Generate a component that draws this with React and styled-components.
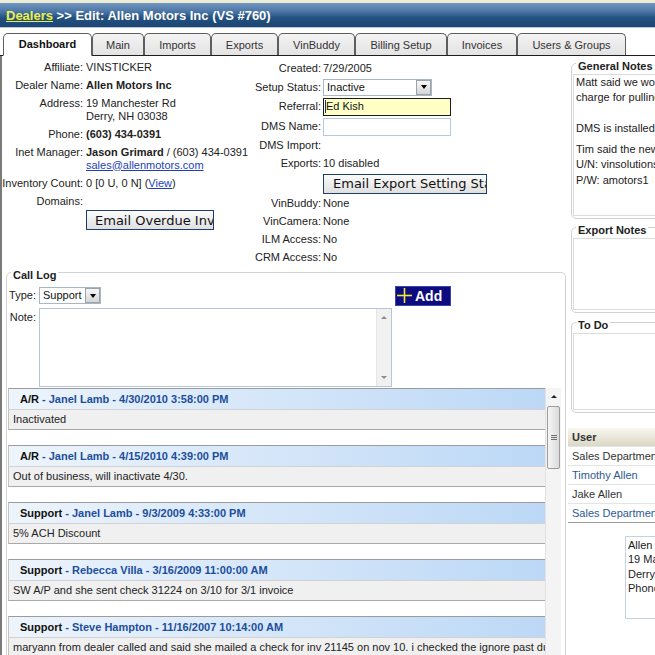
import React from 'react'
import styled, { createGlobalStyle } from 'styled-components'

const GlobalStyle = createGlobalStyle`
  html, body {
    margin: 0;
    padding: 0;
    background: #fff;
    overflow: hidden;
  }
  body {
    font-family: "Liberation Sans", Arial, sans-serif;
    font-size: 11px;
    color: #222;
  }
`

const Page = styled.div`
  width: 800px;
`

const TopStrip = styled.div`
  height: 3px;
  background: #ecebd4;
`

const Header = styled.div`
  height: 25px;
  box-sizing: border-box;
  background: linear-gradient(#7397c0 0%, #4b76a6 35%, #23517f 62%, #1b4574 100%);
  border-bottom: 1px solid #b9c9da;
  display: flex;
  align-items: center;
  padding-left: 6px;
  font: bold 13px "Liberation Sans", Arial, sans-serif;
  color: #fff;
  white-space: nowrap;

  a {
    color: #eef04a;
    text-decoration: underline;
  }
`

const TabBar = styled.div`
  margin-top: 5px;
  height: 22px;
  border-bottom: 1px solid #1e1e1e;
  display: flex;
  align-items: flex-end;
  padding-left: 3px;
`

const Tab = styled.div`
  width: ${p => p.$w}px;
  height: ${p => (p.$active ? 23 : 22)}px;
  margin-bottom: ${p => (p.$active ? -1 : 0)}px;
  box-sizing: border-box;
  border: 1px solid #5e5e5e;
  border-bottom: ${p => (p.$active ? '1px solid #fff' : 'none')};
  border-radius: 5px 5px 0 0;
  background: ${p => (p.$active ? '#fff' : 'linear-gradient(#f3f3f3, #e3e3e3)')};
  font-weight: ${p => (p.$active ? 'bold' : 'normal')};
  color: ${p => (p.$active ? '#111' : '#333')};
  display: flex;
  align-items: center;
  justify-content: center;
  padding-bottom: ${p => (p.$active ? 1 : 0)}px;
  white-space: nowrap;
`

const Content = styled.div`
  display: flex;
  align-items: flex-start;
`

const Main = styled.div`
  width: 566px;
  flex: none;
  box-sizing: border-box;
  border-left: 2px solid #7a7a7a;
  height: 620px;
`

const TopSection = styled.div`
  display: flex;
  padding-top: 2px;
`

const Form = styled.div`
  display: grid;
  grid-template-columns: ${p => p.$label}px auto;
  column-gap: ${p => p.$gap}px;
  width: ${p => p.$width}px;
  margin-top: ${p => p.$offset || 0}px;
  align-content: start;
  align-items: center;
`

const Label = styled.div`
  text-align: right;
  line-height: 13px;
  padding: 2.5px 0;
  white-space: nowrap;
  align-self: ${p => (p.$top ? 'start' : 'center')};
`

const Value = styled.div`
  line-height: 13px;
  padding: ${p => p.$pad || '2.5px 0'};
  white-space: nowrap;
`

const Strong = styled.b`
  font-weight: bold;
`

const Link = styled.a`
  color: #1d3fb4;
  text-decoration: underline;
`

const GrayButton = styled.button`
  display: block;
  width: ${p => p.$w}px;
  height: 20px;
  margin: 0;
  padding: 0 0 0 ${p => p.$indent || 8}px;
  box-sizing: border-box;
  border: 1px solid #1d3d6b;
  background: linear-gradient(#fbfbfb, #e0e0e0);
  font: 13px "DejaVu Sans", Verdana, sans-serif;
  color: #111;
  text-align: left;
  white-space: nowrap;
  overflow: hidden;
`

const Select = styled.div`
  width: ${p => p.$w}px;
  height: 17px;
  box-sizing: border-box;
  border: 1px solid #a8b6c6;
  background: #fff;
  display: flex;
  align-items: center;
  justify-content: space-between;
  padding-left: 3px;
  line-height: 13px;
  color: #111;
`

const DropButton = styled.span`
  width: 15px;
  height: 15px;
  box-sizing: border-box;
  border: 1px solid #9aa2ab;
  background: linear-gradient(#f7f7f7, #d6d6d6);
  display: flex;
  align-items: center;
  justify-content: center;

  &::after {
    content: '';
    border-left: 3.5px solid transparent;
    border-right: 3.5px solid transparent;
    border-top: 4px solid #000;
  }
`

const TextInput = styled.div`
  width: 128px;
  height: 18px;
  box-sizing: border-box;
  border: 1px solid ${p => (p.$focus ? '#1c1c1c' : '#b7c9dc')};
  background: ${p => (p.$focus ? '#ffffc6' : '#fff')};
  display: flex;
  align-items: center;
  padding-left: 1px;
  color: #111;
`

const Caret = styled.span`
  width: 1px;
  height: 13px;
  background: #1b2f8a;
`

const Group = styled.div`
  border: 1px solid #d2d2d2;
  border-radius: 5px;
  margin: ${p => p.$margin};
  padding: ${p => p.$pad || '0'};
`

const GroupTitle = styled.div`
  width: fit-content;
  background: #fff;
  font-weight: bold;
  line-height: 13px;
  color: #222;
  margin: -4px 0 0 4px;
  padding: 0 2px;
`

const CallGrid = styled.div`
  display: grid;
  grid-template-columns: 29px 353px 56px;
  column-gap: 3px;
  row-gap: 2px;
  padding-top: 4px;
  align-items: center;
`

const CallLabel = styled.div`
  text-align: right;
  line-height: 13px;
  align-self: ${p => (p.$top ? 'start' : 'center')};
  padding-top: ${p => (p.$top ? 3 : 0)}px;
`

const NoteBox = styled.div`
  height: 79px;
  box-sizing: border-box;
  border: 1px solid #b5c6d8;
  display: flex;
  justify-content: flex-end;
`

const MiniScroll = styled.div`
  width: 15px;
  background: #f1f1f1;
  border-left: 1px solid #e6e6e6;
  display: flex;
  flex-direction: column;
  justify-content: space-between;
  align-items: center;
  padding: 7px 0;
  box-sizing: border-box;
`

const Arrow = styled.span`
  border-left: 3px solid transparent;
  border-right: 3px solid transparent;
  ${p => (p.$down ? 'border-top' : 'border-bottom')}: 3px solid ${p => p.$color || '#8c8c8c'};
`

const AddButton = styled.button`
  align-self: start;
  width: 56px;
  height: 20px;
  margin: 0;
  box-sizing: border-box;
  border: 1px solid #3b45a6;
  background: #0c0c80;
  color: #fff;
  font: bold 14px "Liberation Sans", Arial, sans-serif;
  display: flex;
  align-items: center;
  padding: 0 0 0 1px;
  gap: 3px;
`

const LogArea = styled.div`
  margin: 1px 4px 0 1px;
  height: 275px;
  display: flex;
  overflow: hidden;
`

const Entries = styled.div`
  flex: 1;
  min-width: 0;
`

const Entry = styled.div`
  margin-bottom: 15px;
`

const EntryHead = styled.div`
  height: 21px;
  box-sizing: border-box;
  border-top: 1px solid #9c9c9c;
  border-left: 1px solid #c2c2c2;
  background: linear-gradient(to right, #edf4fc, #bcd8f6);
  padding-left: 11px;
  display: flex;
  align-items: center;
  font-weight: bold;
  color: #111;
  white-space: nowrap;
`

const Who = styled.span`
  color: #1c4e9b;
`

const EntryBody = styled.div`
  height: 21px;
  box-sizing: border-box;
  border-left: 1px solid #c2c2c2;
  border-top: 1px solid #d2d2d2;
  border-bottom: 1px solid #a9a9a9;
  background: #f0f0f0;
  padding-left: 4px;
  display: flex;
  align-items: center;
  white-space: nowrap;
  overflow: hidden;
  color: #222;
`

const VScroll = styled.div`
  width: 15px;
  flex: none;
  background: #f4f4f4;
  border-left: 1px solid #e2e2e2;
  display: flex;
  flex-direction: column;
  align-items: center;
`

const ScrollUp = styled.div`
  height: 17px;
  display: flex;
  align-items: center;
  justify-content: center;
`

const Thumb = styled.div`
  width: 13px;
  height: 63px;
  margin-top: 1px;
  box-sizing: border-box;
  border: 1px solid #9b9b9b;
  border-radius: 2px;
  background: linear-gradient(to right, #f6f6f6, #dadada);
  display: flex;
  flex-direction: column;
  align-items: center;
  justify-content: center;
  gap: 1px;
`

const Grip = styled.span`
  width: 6px;
  height: 1px;
  background: #6d6d6d;
`

const Sidebar = styled.div`
  width: 232px;
  flex: none;
`

const NoteArea = styled.div`
  height: ${p => p.$h}px;
  margin: 1px 0 2px 1px;
  box-sizing: border-box;
  border: 1px solid #dcdcdc;
  border-right: none;
  padding-left: 2px;
  overflow: hidden;
  color: #222;
`

const NoteLine = styled.div`
  line-height: 15px;
  margin-top: ${p => p.$mt || 0}px;
  white-space: nowrap;
`

const UserTable = styled.div`
  margin: 15px 0 0 2px;
  border-bottom: 1px solid #9c9c9c;
`

const UserHead = styled.div`
  height: 18px;
  background: linear-gradient(#f8f6ef, #dcd8c6);
  font-weight: bold;
  color: #333;
  padding-left: 4px;
  display: flex;
  align-items: center;
`

const UserRow = styled.div`
  height: 19px;
  box-sizing: border-box;
  border-top: 1px solid #e4e4e4;
  padding-left: 4px;
  display: flex;
  align-items: center;
  white-space: nowrap;
  color: ${p => (p.$alt ? '#2d5a94' : '#333')};
`

const AddressBox = styled.div`
  margin: 13px 0 0 59px;
  height: 83px;
  box-sizing: border-box;
  border: 1px solid #c4d1df;
  border-right: none;
  padding: 1px 0 0 2px;
  line-height: 14.5px;
  white-space: nowrap;
  color: #222;
`

const Highlight = styled.span`
  color: #e2a11c;
`

const tabs = [
  { label: 'Dashboard', w: 89, active: true },
  { label: 'Main', w: 52 },
  { label: 'Imports', w: 67 },
  { label: 'Exports', w: 67 },
  { label: 'VinBuddy', w: 77 },
  { label: 'Billing Setup', w: 92 },
  { label: 'Invoices', w: 70 },
  { label: 'Users & Groups', w: 109 },
]

const calls = [
  { type: 'A/R', who: 'Janel Lamb - 4/30/2010 3:58:00 PM', note: 'Inactivated' },
  { type: 'A/R', who: 'Janel Lamb - 4/15/2010 4:39:00 PM', note: 'Out of business, will inactivate 4/30.' },
  { type: 'Support', who: 'Janel Lamb - 9/3/2009 4:33:00 PM', note: '5% ACH Discount' },
  { type: 'Support', who: 'Rebecca Villa - 3/16/2009 11:00:00 AM', note: 'SW A/P and she sent check 31224 on 3/10 for 3/1 invoice' },
  {
    type: 'Support',
    who: 'Steve Hampton - 11/16/2007 10:14:00 AM',
    note: 'maryann from dealer called and said she mailed a check for inv 21145 on nov 10. i checked the ignore past due box',
  },
]

const users = ['Sales Department', 'Timothy Allen', 'Jake Allen', 'Sales Department']

const PlusIcon = () => (
  <svg width="15" height="15" viewBox="0 0 15 15">
    <line x1="0" y1="7.5" x2="15" y2="7.5" stroke="#f1e63a" strokeWidth="1.6" />
    <line x1="7.5" y1="0" x2="7.5" y2="15" stroke="#f1e63a" strokeWidth="1.6" />
  </svg>
)

const App = () => {
  return (
    <Page>
      <GlobalStyle />
      <TopStrip />
      <Header>
        <a>Dealers</a>&nbsp;&gt;&gt; Edit: Allen Motors Inc (VS #760)
      </Header>

      <TabBar>
        {tabs.map(t => (
          <Tab key={t.label} $w={t.w} $active={t.active}>{t.label}</Tab>
        ))}
      </TabBar>

      <Content>
        <Main>
          <TopSection>
            <Form $label={81} $gap={3} $width={248}>
              <Label>Affiliate:</Label>
              <Value>VINSTICKER</Value>
              <Label>Dealer Name:</Label>
              <Value><Strong>Allen Motors Inc</Strong></Value>
              <Label $top>Address:</Label>
              <Value>19 Manchester Rd<br />Derry, NH 03038</Value>
              <Label>Phone:</Label>
              <Value><Strong>(603) 434-0391</Strong></Value>
              <Label $top>Inet Manager:</Label>
              <Value>
                <Strong>Jason Grimard</Strong> / (603) 434-0391<br />
                <Link>sales@allenmotors.com</Link>
              </Value>
              <Label>Inventory Count:</Label>
              <Value>0 [0 U, 0 N] (<Link>View</Link>)</Value>
              <Label>Domains:</Label>
              <Value />
              <span />
              <Value $pad="0 0 0 0">
                <GrayButton $w={128}>Email Overdue Invoices</GrayButton>
              </Value>
            </Form>

            <Form $label={71} $gap={2} $width={300} $offset={1.5}>
              <Label>Created:</Label>
              <Value>7/29/2005</Value>
              <Label>Setup Status:</Label>
              <Value $pad="1px 0">
                <Select $w={109}>Inactive<DropButton /></Select>
              </Value>
              <Label>Referral:</Label>
              <Value $pad="1px 0">
                <TextInput $focus><Caret />Ed Kish</TextInput>
              </Value>
              <Label>DMS Name:</Label>
              <Value $pad="1px 0">
                <TextInput />
              </Value>
              <Label>DMS Import:</Label>
              <Value />
              <Label>Exports:</Label>
              <Value>10 disabled</Value>
              <span />
              <Value $pad="1px 0">
                <GrayButton $w={164} $indent={9}>Email Export Setting Status</GrayButton>
              </Value>
              <Label>VinBuddy:</Label>
              <Value>None</Value>
              <Label>VinCamera:</Label>
              <Value>None</Value>
              <Label>ILM Access:</Label>
              <Value>No</Value>
              <Label>CRM Access:</Label>
              <Value>No</Value>
            </Form>
          </TopSection>

          <Group $margin="5px 0 0 4px">
            <GroupTitle>Call Log</GroupTitle>
            <CallGrid>
              <CallLabel>Type:</CallLabel>
              <Select $w={62}>Support<DropButton /></Select>
              <AddButton><PlusIcon />Add</AddButton>
              <CallLabel $top>Note:</CallLabel>
              <NoteBox>
                <MiniScroll>
                  <Arrow />
                  <Arrow $down />
                </MiniScroll>
              </NoteBox>
              <span />
            </CallGrid>

            <LogArea>
              <Entries>
                {calls.map((c, i) => (
                  <Entry key={i}>
                    <EntryHead>
                      {c.type}&nbsp;<Who>- {c.who}</Who>
                    </EntryHead>
                    <EntryBody>{c.note}</EntryBody>
                  </Entry>
                ))}
              </Entries>
              <VScroll>
                <ScrollUp><Arrow $color="#222" /></ScrollUp>
                <Thumb>
                  <Grip />
                  <Grip />
                  <Grip />
                </Thumb>
              </VScroll>
            </LogArea>
          </Group>
        </Main>

        <Sidebar>
          <Group $margin="6.5px 0 0 5px">
            <GroupTitle>General Notes</GroupTitle>
            <NoteArea $h={142}>
              <NoteLine>Matt said we would not</NoteLine>
              <NoteLine>charge for pulling their inventory.</NoteLine>
              <NoteLine $mt={16}>DMS is installed on their server.</NoteLine>
              <NoteLine $mt={6}>Tim said the new DMS login is</NoteLine>
              <NoteLine>U/N: vinsolutions</NoteLine>
              <NoteLine $mt={1}>P/W: amotors1</NoteLine>
            </NoteArea>
          </Group>

          <Group $margin="8.5px 0 0 5px">
            <GroupTitle>Export Notes</GroupTitle>
            <NoteArea $h={72} />
          </Group>

          <Group $margin="8.5px 0 0 5px">
            <GroupTitle>To Do</GroupTitle>
            <NoteArea $h={77} />
          </Group>

          <UserTable>
            <UserHead>User</UserHead>
            {users.map((u, i) => (
              <UserRow key={i} $alt={i % 2 === 1}>{u}</UserRow>
            ))}
          </UserTable>

          <AddressBox>
            Allen <Highlight>Motors Inc</Highlight><br />
            19 Manchester Rd<br />
            Derry, NH 03038<br />
            Phone: (603) 434-0391
          </AddressBox>
        </Sidebar>
      </Content>
    </Page>
  )
}

export default App
